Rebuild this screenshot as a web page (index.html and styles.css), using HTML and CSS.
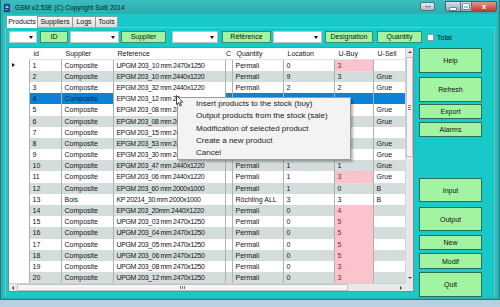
FILE: index.html
```html
<!DOCTYPE html>
<html lang="fr">
<head>
<meta charset="utf-8">
<title>GSM</title>
<link rel="stylesheet" href="styles.css">
</head>
<body>
<div class="window">
  <div class="titlebar">
    <svg class="appicon" width="6" height="9" viewBox="0 0 6 9"><rect x="0.5" y="1.5" width="5" height="7" fill="#1d3f8f" stroke="#0c1f50" stroke-width="0.6"/><rect x="1.5" y="0" width="3" height="2" fill="#3b6fc4"/><rect x="1.5" y="3" width="3" height="2" fill="#7fd0ff"/><rect x="1.5" y="6" width="1.2" height="1.2" fill="#ffd24a"/><rect x="3.2" y="6" width="1.2" height="1.2" fill="#e24a4a"/></svg>
    <span class="title">GSM v2.53E (C) Copyright Solti 2014</span>
    <span class="wb-extra">&#8596;</span>
    <span class="wb-group"><span class="wb min"><i></i></span><span class="wb max"><i></i></span><span class="wb close">x</span></span>
  </div>
  <div class="client">
    <div class="tabs">
      <span class="tab active t1">Products</span><span class="tab t2">Suppliers</span><span class="tab t3">Logs</span><span class="tab t4">Tools</span>
    </div>
    <div class="panel">
      <div class="filters">
        <span class="combo c1"></span>
        <span class="fbtn b1">ID</span>
        <span class="combo c2"></span>
        <span class="fbtn b2">Supplier</span>
        <span class="combo c3"></span>
        <span class="fbtn b3">Référence</span>
        <span class="combo c4"></span>
        <span class="fbtn b4">Designation</span>
        <span class="fbtn b5">Quantity</span>
        <span class="check"></span>
        <span class="total">Total</span>
      </div>
      <div class="content">
        <div class="grid">
          <div class="table">
            <div class="row head"><span class="rh"></span><span>id</span><span>Supplier</span><span>Reference</span><span class="narrow">C</span><span>Quantity</span><span>Location</span><span>U-Buy</span><span>U-Sell</span></div>
            <div class="row"><span class="rh mark"></span><span>1</span><span>Composite</span><span class="ref">UPGM 203_10 mm 2470x1250</span><span></span><span>Permali</span><span>0</span><span class="pink">3</span><span></span></div>
            <div class="row alt"><span class="rh"></span><span>2</span><span>Composite</span><span class="ref">EPGM 203_10 mm 2440x1220</span><span></span><span>Permali</span><span>9</span><span>3</span><span>Grue</span></div>
            <div class="row"><span class="rh"></span><span>3</span><span>Composite</span><span class="ref">EPGM 203_32 mm 2440x1220</span><span></span><span>Permali</span><span>2</span><span>2</span><span>Grue</span></div>
            <div class="row sel"><span class="rh"></span><span>4</span><span>Composite</span><span class="ref cur">EPGM 203_12 mm 24</span><span></span><span></span><span></span><span></span><span></span></div>
            <div class="row"><span class="rh"></span><span>5</span><span>Composite</span><span class="ref">EPGM 203_08 mm 24</span><span></span><span></span><span></span><span></span><span>Grue</span></div>
            <div class="row alt"><span class="rh"></span><span>6</span><span>Composite</span><span class="ref">EPGM 203_08 mm 20</span><span></span><span></span><span></span><span></span><span>Grue</span></div>
            <div class="row"><span class="rh"></span><span>7</span><span>Composite</span><span class="ref">EPGM 203_15 mm 24</span><span></span><span></span><span></span><span></span><span></span></div>
            <div class="row alt"><span class="rh"></span><span>8</span><span>Composite</span><span class="ref">EPGM 203_53 mm 24</span><span></span><span></span><span></span><span></span><span>Grue</span></div>
            <div class="row"><span class="rh"></span><span>9</span><span>Composite</span><span class="ref">EPGM 203_30 mm 24</span><span></span><span></span><span></span><span></span><span>Grue</span></div>
            <div class="row alt"><span class="rh"></span><span>10</span><span>Composite</span><span class="ref">EPGM 203_47 mm 2440x1220</span><span></span><span>Permali</span><span>1</span><span>1</span><span>Grue</span></div>
            <div class="row"><span class="rh"></span><span>11</span><span>Composite</span><span class="ref">EPGM 203_06 mm 2440x1220</span><span></span><span>Permali</span><span>1</span><span class="pink">3</span><span>Grue</span></div>
            <div class="row alt"><span class="rh"></span><span>12</span><span>Composite</span><span class="ref">EPGM 203_60 mm 2000x1000</span><span></span><span>Permali</span><span>1</span><span>0</span><span>B</span></div>
            <div class="row"><span class="rh"></span><span>13</span><span>Bois</span><span class="ref">KP 20214_30 mm 2000x1000</span><span></span><span>Röchling ALL</span><span>3</span><span>3</span><span>B</span></div>
            <div class="row alt"><span class="rh"></span><span>14</span><span>Composite</span><span class="ref">EPGM 203_20mm 2440X1220</span><span></span><span>Permali</span><span>0</span><span class="pink">4</span><span></span></div>
            <div class="row"><span class="rh"></span><span>15</span><span>Composite</span><span class="ref">UPGM 203_03 mm 2470x1250</span><span></span><span>Permali</span><span>0</span><span class="pink">5</span><span></span></div>
            <div class="row alt"><span class="rh"></span><span>16</span><span>Composite</span><span class="ref">UPGM 203_04 mm 2470x1250</span><span></span><span>Permali</span><span>0</span><span class="pink">5</span><span></span></div>
            <div class="row"><span class="rh"></span><span>17</span><span>Composite</span><span class="ref">UPGM 203_05 mm 2470x1250</span><span></span><span>Permali</span><span>0</span><span class="pink">5</span><span></span></div>
            <div class="row alt"><span class="rh"></span><span>18</span><span>Composite</span><span class="ref">UPGM 203_06 mm 2470x1250</span><span></span><span>Permali</span><span>0</span><span class="pink">5</span><span></span></div>
            <div class="row"><span class="rh"></span><span>19</span><span>Composite</span><span class="ref">UPGM 203_08 mm 2470x1250</span><span></span><span>Permali</span><span>0</span><span class="pink">3</span><span></span></div>
            <div class="row alt"><span class="rh"></span><span>20</span><span>Composite</span><span class="ref">UPGM 203_12 mm 2470x1250</span><span></span><span>Permali</span><span>0</span><span class="pink">3</span><span></span></div>
          </div>
          <div class="vscroll">
            <span class="sarrow up"></span>
            <span class="vthumb"><i></i><i></i><i></i></span>
            <span class="sfill"></span>
            <span class="sarrow down"></span>
          </div>
          <div class="hscroll">
            <span class="harrow left"></span>
            <span class="hthumb"><i></i><i></i><i></i></span>
            <span class="sfill"></span>
            <span class="harrow right"></span>
          </div>
          <div class="corner"></div>
        </div>
        <div class="side">
          <span class="sbtn help">Help</span>
          <span class="sbtn refresh">Refresh</span>
          <span class="sbtn export">Export</span>
          <span class="sbtn alarms">Alarms</span>
          <span class="sbtn input">Input</span>
          <span class="sbtn output">Output</span>
          <span class="sbtn new">New</span>
          <span class="sbtn modif">Modif</span>
          <span class="sbtn quit">Quit</span>
        </div>
      </div>
    </div>
  </div>
</div>
<div class="menu">
  <div>Insert products to the stock (buy)</div>
  <div>Output products from the stock (sale)</div>
  <div>Modification of selected product</div>
  <div>Create a new product</div>
  <div>Cancel</div>
</div>
<svg class="cursor" width="8" height="12" viewBox="0 0 8 12"><polygon points="0.5,0.5 0.5,9.5 2.6,7.6 4.1,11 5.5,10.4 4,7.1 6.8,7.1" fill="#fff" stroke="#000" stroke-width="0.7" stroke-linejoin="round"/></svg>
</body>
</html>
```

FILE: styles.css
```css
* { box-sizing: border-box; margin: 0; padding: 0; }
html, body { width: 500px; height: 307px; overflow: hidden; }
body {
  position: relative;
  font-family: "Liberation Sans", Arial, sans-serif;
  font-size: 7px;
  color: #141414;
  background: linear-gradient(#6f9cc0, #b9d0e2);
}

/* window frame */
.window {
  width: 500px;
  height: 300px;
  display: flex;
  flex-direction: column;
  background: #2fb1b3;
  border: 1px solid #257a80;
  border-top: none;
  padding: 0 2px 2px;
}
.titlebar {
  height: 14px;
  flex: none;
  display: flex;
  align-items: center;
  background: linear-gradient(#3cbcbe, #2aaeb0);
  margin: 0 -2px;
  padding: 0 2px 0 3px;
}
.appicon { flex: none; margin-top: 1px; }
.title {
  margin-left: 5px;
  font-size: 6.6px;
  color: #0c1a1a;
  white-space: nowrap;
}
.wb-extra {
  margin-left: auto;
  margin-right: 10px;
  width: 15px;
  height: 9px;
  margin-top: -1px;
  border: 1px solid #50707a;
  border-radius: 2px;
  background: linear-gradient(#e4eef3, #a4bccb);
  font-size: 8px;
  line-height: 6px;
  text-align: center;
  color: #1d2d3a;
}
.wb-group {
  display: flex;
  height: 11px;
  align-self: flex-start;
  margin-top: 1px;
  border: 1px solid #46606c;
  border-radius: 0 0 3px 3px;
  overflow: hidden;
}
.wb {
  display: flex;
  align-items: center;
  justify-content: center;
  height: 100%;
  background: linear-gradient(#d3e1ea, #8ea9bb);
  border-right: 1px solid #5b7584;
}
.wb.min { width: 15px; }
.wb.max { width: 11px; }
.wb.close {
  width: 24px;
  border-right: none;
  background: linear-gradient(#e7958a, #c23b2a);
  color: #fff;
  font-size: 8px;
  font-weight: bold;
  line-height: 8px;
}
.wb.min i { display: block; width: 6px; height: 2px; background: #fff; margin-top: 4px; box-shadow: 0 0 0 0.5px #3a5563; }
.wb.max i { display: block; width: 6px; height: 5px; border: 1px solid #fff; border-top-width: 2px; box-shadow: 0 0 0 0.5px #3a5563; }

/* client */
.client {
  flex: 1;
  display: flex;
  flex-direction: column;
  background: #19c9ca;
  min-height: 0;
}
.tabs {
  height: 13px;
  flex: none;
  display: flex;
  align-items: flex-end;
  padding-left: 3px;
}
.tab {
  height: 11px;
  border: 1px solid #86a2a4;
  border-bottom: none;
  margin-right: -1px;
  background: linear-gradient(#f7f7f7, #dcdedf);
  text-align: center;
  line-height: 10px;
  font-size: 7px;
  color: #111;
}
.tab.active {
  height: 13px;
  background: #fff;
  margin-bottom: -1px;
  position: relative;
  z-index: 1;
  line-height: 11px;
}
.t1 { width: 32px; }
.t2 { width: 36px; }
.t3 { width: 24px; }
.t4 { width: 23px; }

.panel {
  flex: 1;
  min-height: 0;
  margin: 0 2px 0 2px;
  border: 1px solid #8ab8ba;
  border-bottom: none;
  padding: 3px 0 0 2px;
  display: flex;
  flex-direction: column;
}

/* filter row */
.filters {
  height: 12px;
  flex: none;
  display: flex;
  align-items: center;
  margin-left: 1px;
}
.combo {
  position: relative;
  height: 12px;
  background: #fff;
  border: 1px solid #b8c6c7;
}
.combo::after {
  content: "";
  position: absolute;
  right: 3px;
  top: 4px;
  border-left: 2px solid transparent;
  border-right: 2px solid transparent;
  border-top: 3px solid #111;
}
.fbtn {
  height: 12px;
  background: #a2f4a2;
  border: 1px solid #3f8a62;
  text-align: center;
  line-height: 10px;
  font-size: 7px;
  color: #111;
}
.c1 { width: 28px; }
.b1 { width: 28px; margin-left: 3px; }
.c2 { width: 49px; margin-left: 2px; }
.b2 { width: 45px; margin-left: 2px; }
.c3 { width: 46px; margin-left: 6px; }
.b3 { width: 49px; margin-left: 4px; }
.c4 { width: 49px; margin-left: 2px; }
.b4 { width: 48px; margin-left: 3px; }
.b5 { width: 45px; margin-left: 4px; }
.check {
  width: 7px;
  height: 7px;
  margin-left: 5px;
  background: #fff;
  border: 1px solid #8c9c9e;
}
.total { margin-left: 3px; font-size: 7px; color: #111; }

/* content: grid + side buttons */
.content {
  display: flex;
  align-items: flex-start;
  margin-top: 4px;
}
.grid {
  display: grid;
  grid-template-columns: 396px 8px;
  grid-template-rows: auto 8px;
  border: 1px solid #7b8b8c;
  background: #fff;
}
.table { display: flex; flex-direction: column; }
.row {
  display: grid;
  grid-template-columns: 20px 32px 52px 112px 7px 51px 51px 39px 32px;
  height: 11.2px;
  line-height: 11.2px;
  background: #fff;
}
.row > span {
  border-left: 1px solid #aab3b3;
  padding-left: 2.5px;
  white-space: nowrap;
  overflow: hidden;
}
.row > span.rh { border-left: none; background: #fff; position: relative; }
.row.alt > span { background: #d4dcdc; }
.row.alt > span.rh { background: #fff; }
.row.sel > span { background: #0b82d8; color: #0d2440; }
.row.sel > span.rh { background: #fff; }
.row > span.cur { background: #fff; color: #141414; }
.row > span.pink { background: #fbc3cc; color: #a3141f; }
.ref { letter-spacing: -0.35px; }
.row.head {
  height: 11.6px;
  line-height: 11.6px;
  border-bottom: 1px solid #dde3e3;
}
.row.head > span { border-left: none; padding-left: 4.5px; }
.row.head > span.narrow { padding-left: 1px; overflow: visible; }
.rh.mark::after {
  content: "";
  position: absolute;
  left: 3px;
  top: 3.5px;
  border-top: 2px solid transparent;
  border-bottom: 2px solid transparent;
  border-left: 3px solid #111;
}

.vscroll {
  display: flex;
  flex-direction: column;
  background: #e8e8e8;
  border-left: 1px solid #d2d2d2;
}
.sarrow { height: 9px; flex: none; position: relative; }
.sarrow::after {
  content: "";
  position: absolute;
  left: 2px;
  top: 3px;
  border-left: 2px solid transparent;
  border-right: 2px solid transparent;
}
.sarrow.up::after { border-bottom: 2px solid #444; }
.sarrow.down::after { border-top: 2px solid #444; }
.vthumb {
  height: 100px;
  flex: none;
  background: #f6f6f6;
  border: 1px solid #c2c2c2;
  display: flex;
  flex-direction: column;
  align-items: center;
  justify-content: center;
  gap: 1px;
}
.vthumb i { display: block; width: 3px; height: 1px; background: #777; }
.sfill { flex: 1; }
.hscroll {
  display: flex;
  background: #e8e8e8;
  border-top: 1px solid #d2d2d2;
}
.harrow { width: 8px; flex: none; position: relative; }
.harrow::after {
  content: "";
  position: absolute;
  top: 2px;
  left: 3px;
  border-top: 2px solid transparent;
  border-bottom: 2px solid transparent;
}
.harrow.left::after { border-right: 2px solid #444; }
.harrow.right::after { border-left: 2px solid #444; }
.hthumb {
  width: 331px;
  flex: none;
  background: #f6f6f6;
  border: 1px solid #c2c2c2;
  display: flex;
  align-items: center;
  justify-content: center;
  gap: 1px;
}
.hthumb i { display: block; width: 1px; height: 3px; background: #777; }
.corner { background: #e8e8e8; }

/* side buttons */
.side {
  width: 63px;
  margin-left: 5px;
  display: flex;
  flex-direction: column;
}
.sbtn {
  display: flex;
  align-items: center;
  justify-content: center;
  background: #a2f4a2;
  border: 1px solid #2e6d57;
  font-size: 7px;
  color: #111;
}
.help { height: 25px; margin-top: 1px; }
.refresh { height: 25px; margin-top: 4px; }
.export { height: 15px; margin-top: 2px; }
.alarms { height: 15px; margin-top: 3px; }
.input { height: 24px; margin-top: 41px; }
.output { height: 24px; margin-top: 5px; }
.new { height: 15px; margin-top: 4px; }
.modif { height: 16px; margin-top: 3px; }
.quit { height: 25px; margin-top: 3px; }

/* context menu overlay */
.menu {
  position: absolute;
  left: 177px;
  top: 97px;
  width: 174px;
  height: 63px;
  background: #f3f3f3;
  border: 1px solid #9a9a9a;
  box-shadow: 2px 2px 2px rgba(0, 0, 0, 0.28);
  padding-left: 18px;
  font-size: 8px;
  color: #1b1b1b;
}
.menu div { height: 12.3px; line-height: 12.3px; white-space: nowrap; }

.cursor {
  position: absolute;
  left: 176px;
  top: 95px;
}
```
